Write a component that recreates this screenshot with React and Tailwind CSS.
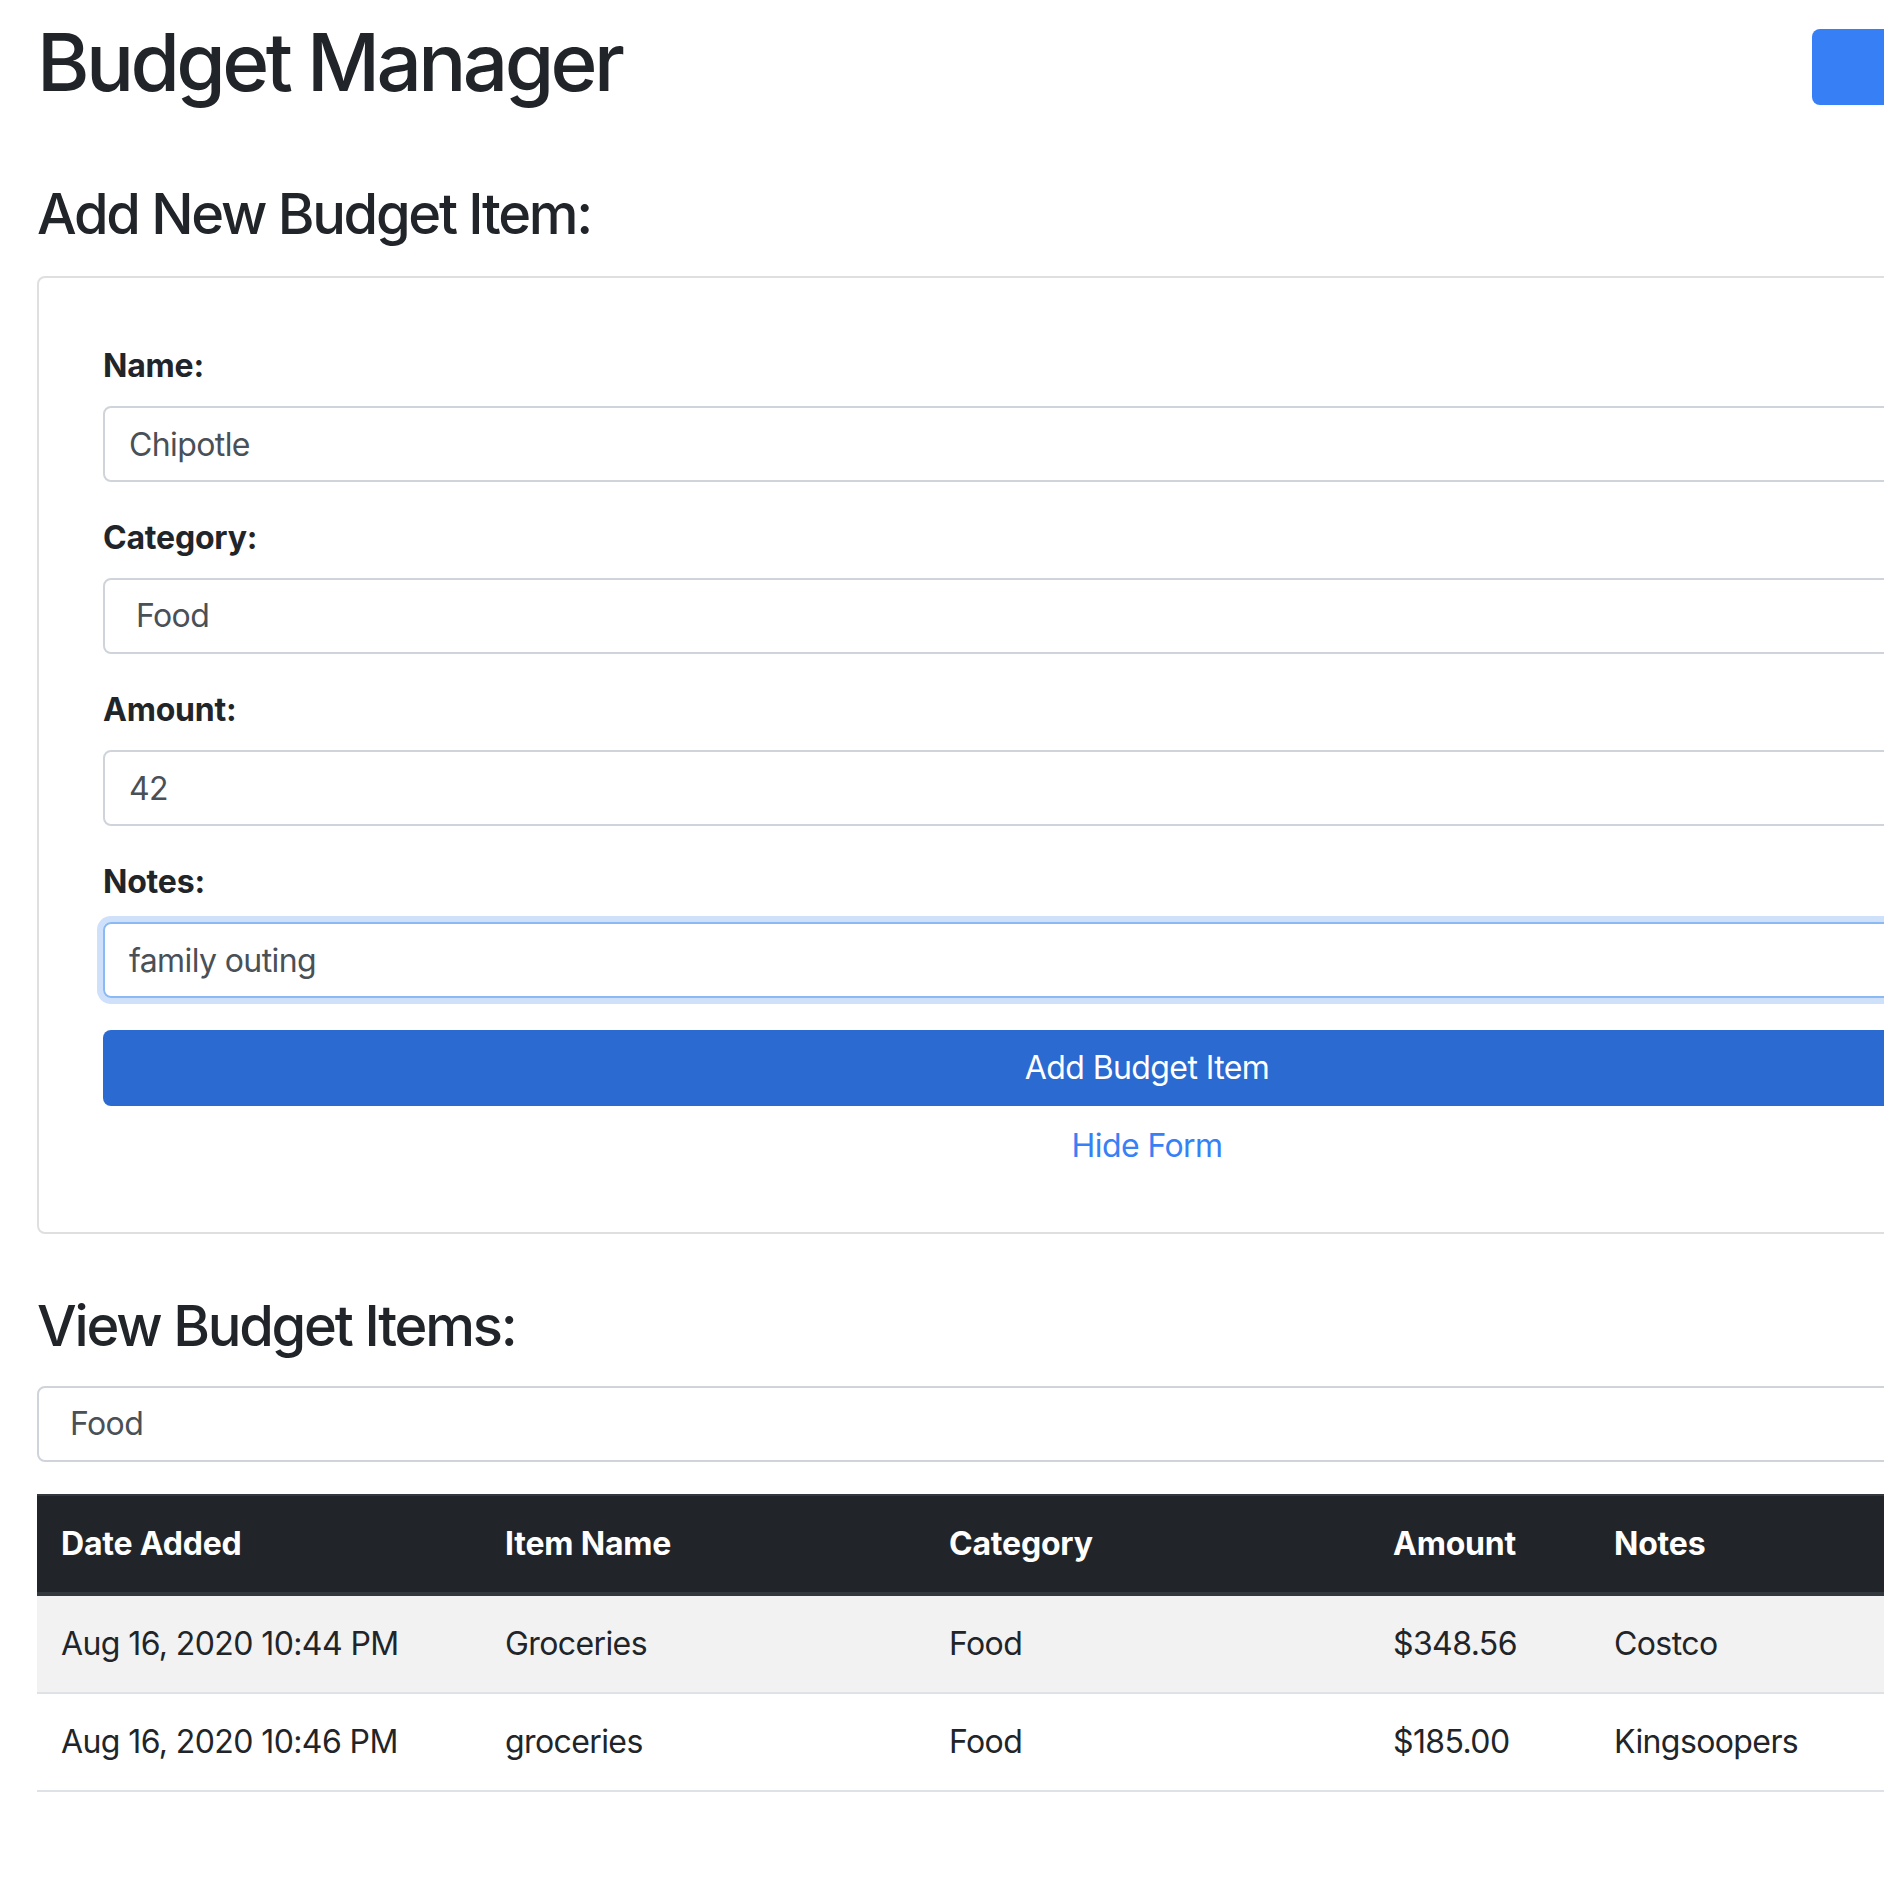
import React from "react";

const rows = [
  { date: "Aug 16, 2020 10:44 PM", name: "Groceries", category: "Food", amount: "$348.56", notes: "Costco" },
  { date: "Aug 16, 2020 10:46 PM", name: "groceries", category: "Food", amount: "$185.00", notes: "Kingsoopers" },
];

export default function App() {
  return (
    <div className="h-[1884px] w-[1884px] overflow-hidden bg-white font-['Inter','Noto_Sans',sans-serif] tracking-[-0.6px] text-[#212529]">
      <div className="ml-[37px] w-[2220px]">
        {/* Header */}
        <div className="flex items-start justify-between">
          <h1 className="mt-[14px] text-[80px] font-medium leading-[96px] tracking-[-3.6px]">Budget Manager</h1>
          <button aria-label="Account" className="mt-[29px] h-[76px] w-[445px] rounded-[8px] bg-[#367ff5]" />
        </div>

        {/* Add form */}
        <h2 className="mb-[28px] mt-[71px] text-[56px] font-medium leading-[67px] tracking-[-2.3px]">Add New Budget Item:</h2>
        <div className="rounded-[8px] border-2 border-[#dfdfdf] px-[64px] pb-[62px] pt-[64px]">
          <FormGroup label="Name:">
            <input readOnly defaultValue="Chipotle" className="h-[76px] w-full rounded-[8px] border-2 border-[#ced4da] px-[24px] text-[32px] text-[#495057] outline-none" />
          </FormGroup>
          <FormGroup label="Category:">
            <select defaultValue="Food" className="h-[76px] w-full appearance-none rounded-[8px] border-2 border-[#ced4da] bg-white pl-[31px] pr-[24px] text-[32px] text-[#495057] outline-none">
              <option>Food</option>
            </select>
          </FormGroup>
          <FormGroup label="Amount:">
            <input readOnly defaultValue="42" className="h-[76px] w-full rounded-[8px] border-2 border-[#ced4da] px-[24px] text-[32px] text-[#495057] outline-none" />
          </FormGroup>
          <FormGroup label="Notes:">
            <input readOnly defaultValue="family outing" className="h-[76px] w-full rounded-[8px] border-2 border-[#8ab9f3] px-[24px] text-[32px] text-[#495057] shadow-[0_0_0_6px_#cfe0fb] outline-none" />
          </FormGroup>
          <button className="h-[76px] w-full rounded-[8px] bg-[#2b6ad1] text-[32px] leading-[48px] text-white">Add Budget Item</button>
          <p className="mt-[16px] text-center text-[32px] leading-[48px] text-[#3780f5]">Hide Form</p>
        </div>

        {/* View items */}
        <h2 className="mb-[26px] mt-[59px] text-[56px] font-medium leading-[67px] tracking-[-2.2px]">View Budget Items:</h2>
        <select defaultValue="Food" className="mb-[32px] block h-[76px] w-full appearance-none rounded-[8px] border-2 border-[#ced4da] bg-white pl-[31px] pr-[24px] text-[32px] text-[#495057] outline-none">
          <option>Food</option>
        </select>

        <table className="w-full table-fixed border-separate border-spacing-0 text-left text-[32px] leading-[48px]">
          <thead>
            <tr className="bg-[#212529] text-white">
              <th className="w-[444px] border-y-2 border-b-4 border-[#32383e] px-[24px] py-[24px] font-bold tracking-[-0.2px]">Date Added</th>
              <th className="w-[444px] border-y-2 border-b-4 border-[#32383e] px-[24px] py-[24px] font-bold tracking-[-0.2px]">Item Name</th>
              <th className="w-[444px] border-y-2 border-b-4 border-[#32383e] px-[24px] py-[24px] font-bold tracking-[-0.2px]">Category</th>
              <th className="w-[221px] border-y-2 border-b-4 border-[#32383e] px-[24px] py-[24px] font-bold tracking-[-0.2px]">Amount</th>
              <th className="border-y-2 border-b-4 border-[#32383e] px-[24px] py-[24px] font-bold tracking-[-0.2px]">Notes</th>
            </tr>
          </thead>
          <tbody>
            {rows.map((row, i) => (
              <tr key={row.date} className={i % 2 === 0 ? "bg-[#f2f2f2]" : "bg-white"}>
                {[row.date, row.name, row.category, row.amount, row.notes].map((cell, j) => (
                  <td
                    key={j}
                    className={
                      i === 0
                        ? "px-[24px] py-[24px]"
                        : "border-y-2 border-[#dee2e6] px-[24px] py-[24px]"
                    }
                  >
                    {cell}
                  </td>
                ))}
              </tr>
            ))}
          </tbody>
        </table>
      </div>
    </div>
  );
}

function FormGroup({ label, children }) {
  return (
    <div className="mb-[32px]">
      <label className="mb-[16px] block text-[32px] font-bold leading-[48px] tracking-[-0.2px]">{label}</label>
      {children}
    </div>
  );
}
